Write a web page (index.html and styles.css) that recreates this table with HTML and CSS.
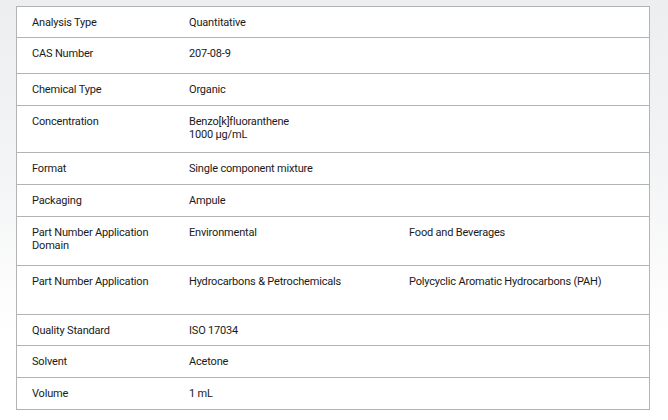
FILE: index.html
```html
<!DOCTYPE html>
<html lang="en">
<head>
<meta charset="utf-8">
<title>Product Specifications</title>
<link rel="stylesheet" href="styles.css">
</head>
<body>
<div class="specs">
  <div class="row h30"><div class="cell">Analysis Type</div><div class="cell">Quantitative</div><div class="cell"></div></div>
  <div class="row h35"><div class="cell">CAS Number</div><div class="cell">207-08-9</div><div class="cell"></div></div>
  <div class="row h31"><div class="cell">Chemical Type</div><div class="cell">Organic</div><div class="cell"></div></div>
  <div class="row h46"><div class="cell">Concentration</div><div class="cell">Benzo[k]fluoranthene<br>1000 µg/mL</div><div class="cell"></div></div>
  <div class="row h31"><div class="cell">Format</div><div class="cell">Single component mixture</div><div class="cell"></div></div>
  <div class="row h31"><div class="cell">Packaging</div><div class="cell">Ampule</div><div class="cell"></div></div>
  <div class="row h48"><div class="cell">Part Number Application Domain</div><div class="cell">Environmental</div><div class="cell">Food and Beverages</div></div>
  <div class="row h48"><div class="cell">Part Number Application</div><div class="cell">Hydrocarbons &amp; Petrochemicals</div><div class="cell">Polycyclic Aromatic Hydrocarbons (PAH)</div></div>
  <div class="row h30"><div class="cell">Quality Standard</div><div class="cell">ISO 17034</div><div class="cell"></div></div>
  <div class="row h31"><div class="cell">Solvent</div><div class="cell">Acetone</div><div class="cell"></div></div>
  <div class="row h31"><div class="cell">Volume</div><div class="cell">1 mL</div><div class="cell"></div></div>
</div>
</body>
</html>
```
FILE: styles.css
```css
html, body {
  margin: 0;
  padding: 0;
}
body {
  width: 668px;
  height: 420px;
  overflow: hidden;
  background: linear-gradient(to bottom, #eceef0 0%, #f3f4f5 40%, #ffffff 80%);
  font-family: Roboto, "Liberation Sans", Arial, sans-serif;
  font-size: 11px;
  line-height: 13px;
  letter-spacing: -0.18px;
  color: #1a1a1a;
}
.specs {
  margin: 6px 0 0 16px;
  width: 632px;
  border: 1px solid #b3b3b3;
  background: #ffffff;
}
.row {
  display: grid;
  grid-template-columns: 157px 220px 1fr;
  box-sizing: content-box;
}
.row + .row {
  border-top: 1px solid #b3b3b3;
}
.cell {
  padding: 9px 15px 0 15px;
}
.h30 { height: 30px; }
.h31 { height: 31px; }
.h35 { height: 35px; }
.h46 { height: 46px; }
.h48 { height: 48px; }
```
